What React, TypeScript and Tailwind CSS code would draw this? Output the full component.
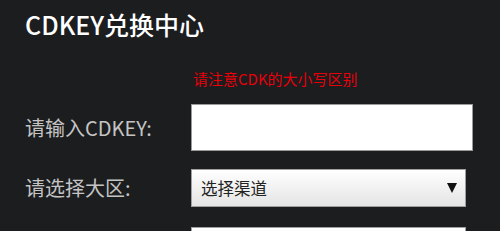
import React from 'react';

const font = { fontFamily: '"Noto Sans CJK SC", "Noto Sans", sans-serif' };

const Row = ({ label, children, className = '' }: any) => (
  <div className={`grid grid-cols-[166px_1fr] items-center ${className}`}>
    <div className="text-[20px] leading-[26px] text-[#c4c4c4]">{label}</div>
    {children}
  </div>
);

export default function App() {
  return (
    <div
      className="h-[231px] w-[500px] overflow-hidden bg-[#1c1d1f] pl-[25px]"
      style={font}
    >
      <h1 className="text-[25px] font-medium leading-[48px] text-white">
        CDKEY兑换中心
      </h1>
      <div className="mt-[21px] pl-[168px] text-[15px] leading-[20px] text-[#e8000a]">
        请注意CDK的大小写区别
      </div>
      <Row label="请输入CDKEY:" className="mt-[15px]">
        <input
          type="text"
          className="h-[47px] w-[282px] border border-[#9a9a9a] bg-white px-2 outline-none"
        />
      </Row>
      <Row label="请选择大区:" className="mt-[18px]">
        <div className="flex h-[38px] w-[275px] items-center justify-between border border-[#a0a0a0] bg-gradient-to-b from-white to-[#e4e4e4] pl-[9px] pr-[8px]">
          <span className="text-[16.5px] text-[#222]">选择渠道</span>
          <svg width="10" height="10" viewBox="0 0 10 10">
            <path d="M0 0 H10 L5 10 Z" fill="#111" />
          </svg>
        </div>
      </Row>
      <Row label="" className="mt-[20px]">
        <div className="h-[38px] w-[275px] border border-[#a0a0a0] bg-gradient-to-b from-white to-[#e4e4e4]" />
      </Row>
    </div>
  );
}
